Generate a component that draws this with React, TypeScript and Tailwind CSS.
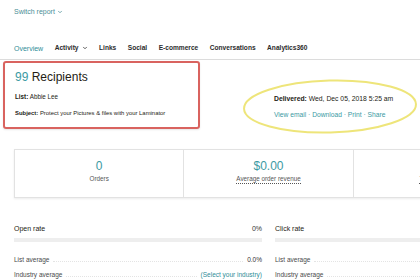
import { ChevronDown } from "lucide-react"

const tabs = ["Overview", "Activity", "Links", "Social", "E-commerce", "Conversations", "Analytics360"]

function RateRow({ label, value, teal }: { label: string; value: string; teal?: boolean }) {
  return (
    <div className="flex items-end gap-1 h-[15px]">
      <span className="text-[6.5px] text-[#4a4a4a] leading-none">{label}</span>
      <span className="flex-1 border-b border-dotted border-[#e4e4e4] mb-[1px]" />
      <span className={`text-[6.5px] leading-none ${teal ? "text-[#2f8e98]" : "text-[#333]"}`}>{value}</span>
    </div>
  )
}

export default function App() {
  return (
    <div
      className="relative w-[420px] h-[280px] overflow-hidden bg-white text-[#241c15]"
      style={{ fontFamily: '"Liberation Sans", Arial, sans-serif' }}
    >
      {/* Header */}
      <div className="pl-[14px] pt-[8px] flex items-center gap-[2px] text-[7px] leading-[8px] text-[#4a8e96]">
        Switch report
        <ChevronDown className="w-[6px] h-[6px]" strokeWidth={3} />
      </div>

      {/* Tabs */}
      <div className="mt-[25px] border-b border-[#dcdcdc] pl-[14px] pb-[6px] flex items-center h-[19px] pt-[2px] gap-[11.5px]">
        {tabs.map((t, i) => (
          <span
            key={t}
            className={`flex items-center gap-[2px] leading-none ${
              i === 0 ? "text-[7px] text-[#2f8e98]" : "text-[6.6px] text-[#2b2b2b] font-bold"
            }`}
          >
            {t}
            {t === "Activity" && <ChevronDown className="w-[6px] h-[6px] ml-[1px]" strokeWidth={3} />}
          </span>
        ))}
      </div>

      {/* Summary */}
      <div className="flex mt-[1px]">
        <div className="ml-[3px] w-[197px] h-[68px] border-2 border-[#d9635f] rounded-[3px] px-[10px] pt-[7px] shadow-[0_1px_2px_rgba(0,0,0,0.1)]">
          <div className="text-[12px] leading-[14px]">
            <span className="text-[#3b9aa3]">99</span> Recipients
          </div>
          <div className="mt-[9px] text-[6.3px] leading-[8px]">
            <span className="font-bold">List:</span> Abbie Lee
          </div>
          <div className="mt-[8px] text-[5.9px] leading-[8px] whitespace-nowrap">
            <span className="font-bold">Subject:</span> Protect your Pictures &amp; files with your Laminator
          </div>
        </div>
        <div className="ml-[74px] pt-[34px]">
          <div className="text-[6.8px] leading-[8px] whitespace-nowrap">
            <span className="font-bold">Delivered:</span> Wed, Dec 05, 2018 5:25 am
          </div>
          <div className="mt-[8px] text-[6.7px] leading-[8px] text-[#3b9aa3] whitespace-nowrap">
            View email · Download · Print · Share
          </div>
        </div>
      </div>

      {/* Yellow annotation ellipse */}
      <svg className="absolute left-[241px] top-[78px]" width="180" height="58" viewBox="0 0 180 58">
        <ellipse cx="89" cy="28.5" rx="86" ry="26" fill="none" stroke="#eee57a" strokeWidth="2" transform="rotate(-1.5 89 28.5)" />
      </svg>

      {/* Stats card */}
      <div className="ml-[14px] mt-[20px] w-[510px] h-[49px] grid grid-cols-3 border border-[#e2e2e2] shadow-[0_1px_2px_rgba(0,0,0,0.08)]">
        <div className="flex flex-col items-center pt-[10px] border-r border-[#e2e2e2]">
          <div className="text-[12px] leading-[13px] text-[#3b9aa3]">0</div>
          <div className="mt-[2px] text-[6.3px] leading-[8px] text-[#555]">Orders</div>
        </div>
        <div className="flex flex-col items-center pt-[10px] border-r border-[#e2e2e2]">
          <div className="text-[12px] leading-[13px] text-[#3b9aa3]">$0.00</div>
          <div className="mt-[2px] text-[6.3px] leading-[8px] text-[#555] border-b border-dotted border-[#555]">
            Average order revenue
          </div>
        </div>
        <div className="flex flex-col items-center pt-[10px]">
          <div className="text-[12px] leading-[13px] text-[#3b9aa3]">$0.00</div>
          <div className="mt-[2px] text-[6.3px] leading-[8px] text-[#555] border-b border-dotted border-[#555]">
            Total revenue
          </div>
        </div>
      </div>

      {/* Rates */}
      <div className="mt-[27px] pl-[14px] flex gap-[13px]">
        <div className="w-[248px] shrink-0">
          <div className="flex justify-between text-[7px] leading-[8px]">
            <span>Open rate</span>
            <span className="text-[#333]">0%</span>
          </div>
          <div className="mt-[5px] h-[4px] bg-[#eeeeee]" />
          <div className="mt-[6px]">
            <RateRow label="List average" value="0.0%" />
            <RateRow label="Industry average" value="(Select your industry)" teal />
          </div>
        </div>
        <div className="w-[250px] shrink-0">
          <div className="text-[7px] leading-[8px]">Click rate</div>
          <div className="mt-[5px] h-[4px] bg-[#eeeeee]" />
          <div className="mt-[6px]">
            <RateRow label="List average" value="0.0%" />
            <RateRow label="Industry average" value="(Select your industry)" teal />
          </div>
        </div>
      </div>
    </div>
  )
}
